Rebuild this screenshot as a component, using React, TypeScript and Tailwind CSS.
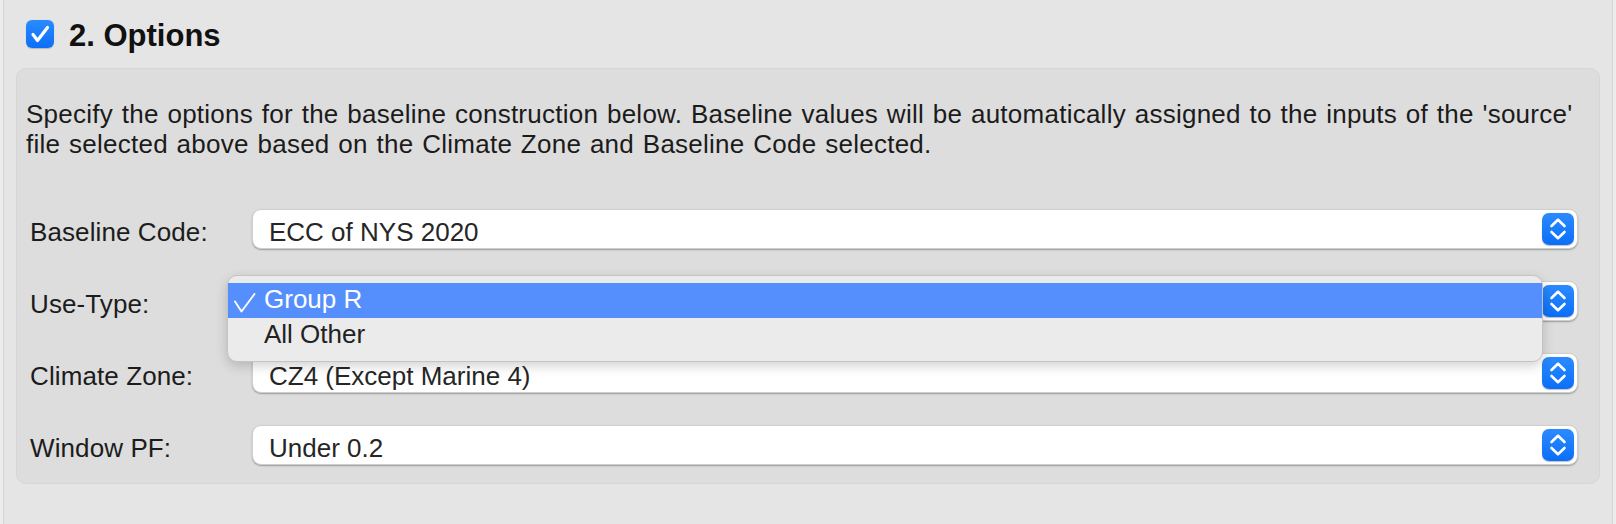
import React from 'react';

const font = { fontFamily: '"Liberation Sans", Arial, sans-serif' };

function Stepper() {
  return (
    <div className="w-[32px] h-[32px] rounded-[7px] bg-gradient-to-b from-[#2a8bff] to-[#0a6ef7] shadow-[0_0.5px_1px_rgba(0,0,0,0.25)] flex items-center justify-center">
      <svg width="32" height="32" viewBox="0 0 32 32" fill="none">
        <path d="M9.5 13 L16 6.8 L22.5 13" stroke="white" strokeWidth="2.6" strokeLinecap="round" strokeLinejoin="round" />
        <path d="M9.5 19 L16 25.2 L22.5 19" stroke="white" strokeWidth="2.6" strokeLinecap="round" strokeLinejoin="round" />
      </svg>
    </div>
  );
}

function UseTypeMenu() {
  return (
    <div className="absolute left-[-26px] top-[-7px] z-10 w-[1316px] h-[87px] rounded-[10px] border border-[#c4c4c4] bg-[#ebebeb] pt-[7px] shadow-[0_4px_12px_rgba(0,0,0,0.18)]">
      <div className="relative h-[35px] bg-[#548ffd] pl-[36px] text-[26px] leading-[33px] text-white">
        <svg className="absolute left-[6px] top-[10px]" width="22" height="20" viewBox="0 0 22 20" fill="none">
          <path d="M1 8.5 L7.5 18.5 L20.5 1" stroke="white" strokeWidth="1.9" strokeLinecap="round" strokeLinejoin="round" />
        </svg>
        Group R
      </div>
      <div className="h-[35px] pl-[36px] text-[26px] leading-[33px] text-[#222]">All Other</div>
    </div>
  );
}

function Row({ label, value, menu }: { label: string; value: string; menu?: boolean }) {
  return (
    <div className="flex items-center h-[40px] pl-[4px] pr-[12px]">
      <div className="w-[222px] shrink-0 pt-[5px] text-[26px] leading-[30px] text-[#1c1c1c] tracking-[0.1px]">{label}</div>
      <div className="relative flex-1 h-[40px] rounded-[9px] bg-white border-[0.5px] border-[#cfcfcf] shadow-[0_1px_1.5px_rgba(0,0,0,0.3)] flex items-center justify-between pl-[16px] pr-[3.5px]">
        <span className="pt-[5px] text-[26px] leading-[30px] text-[#262626]">{value}</span>
        <Stepper />
        {menu && <UseTypeMenu />}
      </div>
    </div>
  );
}

export default function App() {
  return (
    <div className="w-[1616px] h-[524px] bg-[#ececec] overflow-hidden" style={font}>
      <div className="h-full ml-[3px] mr-[3px] border-x border-[#d4d4d4] bg-[#e5e5e5] pl-[12px] pr-[12px] pt-[20px]">
        <div className="flex items-center h-[28px] gap-[15px] pl-[10px]">
          <div className="w-[28px] h-[28px] rounded-[6px] bg-gradient-to-b from-[#2a8bff] to-[#0a6ef7] flex items-center justify-center shadow-[0_0.5px_1px_rgba(0,0,0,0.2)]">
            <svg width="28" height="28" viewBox="0 0 28 28" fill="none">
              <path d="M7 14.5 L11.5 20.5 L21.5 7.5" stroke="white" strokeWidth="3.2" strokeLinecap="round" strokeLinejoin="round" />
            </svg>
          </div>
          <h2 className="text-[31px] leading-[28px] font-bold text-[#111] pt-[3px]">2. Options</h2>
        </div>

        <div className="mt-[20px] rounded-[10px] border border-[#d6d6d6] bg-[#dddddd] pt-[30px] pb-[18px] pl-[9px] pr-[9px]">
          <p className="text-[26px] leading-[30px] text-[#1b1b1b] whitespace-nowrap tracking-[0.25px] [word-spacing:1.3px]">
            Specify the options for the baseline construction below. Baseline values will be automatically assigned to the inputs of the 'source'
            <br />
            file selected above based on the Climate Zone and Baseline Code selected.
          </p>

          <div className="mt-[50px] flex flex-col gap-[32px]">
            <Row label="Baseline Code:" value="ECC of NYS 2020" />
            <Row label="Use-Type:" value="" menu />
            <Row label="Climate Zone:" value="CZ4 (Except Marine 4)" />
            <Row label="Window PF:" value="Under 0.2" />
          </div>
        </div>
      </div>
    </div>
  );
}
